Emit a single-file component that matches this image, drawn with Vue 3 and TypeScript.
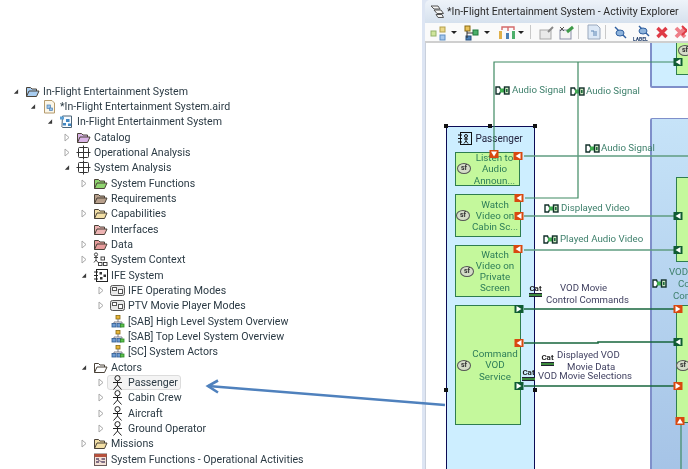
<script setup lang="ts">
interface TreeRow {
  label: string;
  depth: number;
  twisty?: 'open' | 'closed';
  icon: string;
  tint?: string;
  selected?: boolean;
}

const rows: TreeRow[] = [
  { label: 'In-Flight Entertainment System', depth: 0, twisty: 'open', icon: 'folder', tint: '#a9cdf0' },
  { label: '*In-Flight Entertainment System.aird', depth: 1, twisty: 'open', icon: 'file' },
  { label: 'In-Flight Entertainment System', depth: 2, twisty: 'open', icon: 'model' },
  { label: 'Catalog', depth: 3, twisty: 'closed', icon: 'folder', tint: '#d9b3e6' },
  { label: 'Operational Analysis', depth: 3, twisty: 'closed', icon: 'grid' },
  { label: 'System Analysis', depth: 3, twisty: 'open', icon: 'grid' },
  { label: 'System Functions', depth: 4, twisty: 'closed', icon: 'folder', tint: '#8fd46f' },
  { label: 'Requirements', depth: 4, icon: 'folder', tint: '#b8a08c' },
  { label: 'Capabilities', depth: 4, twisty: 'closed', icon: 'folder', tint: '#f2dfa6' },
  { label: 'Interfaces', depth: 4, icon: 'folder', tint: '#eeb4b4' },
  { label: 'Data', depth: 4, twisty: 'closed', icon: 'folder', tint: '#e89c9c' },
  { label: 'System Context', depth: 4, twisty: 'closed', icon: 'context' },
  { label: 'IFE System', depth: 4, twisty: 'open', icon: 'system' },
  { label: 'IFE Operating Modes', depth: 5, twisty: 'closed', icon: 'mode' },
  { label: 'PTV Movie Player Modes', depth: 5, twisty: 'closed', icon: 'mode' },
  { label: '[SAB] High Level System Overview', depth: 5, icon: 'diagram' },
  { label: '[SAB] Top Level System Overview', depth: 5, icon: 'diagram' },
  { label: '[SC] System Actors', depth: 5, icon: 'diagram' },
  { label: 'Actors', depth: 4, twisty: 'open', icon: 'folder', tint: '#ffffff' },
  { label: 'Passenger', depth: 5, twisty: 'closed', icon: 'actor', selected: true },
  { label: 'Cabin Crew', depth: 5, twisty: 'closed', icon: 'actor' },
  { label: 'Aircraft', depth: 5, twisty: 'closed', icon: 'actor' },
  { label: 'Ground Operator', depth: 5, twisty: 'closed', icon: 'actor' },
  { label: 'Missions', depth: 4, twisty: 'closed', icon: 'folder', tint: '#f2dfa6' },
  { label: 'System Functions - Operational Activities', depth: 4, icon: 'activity' },
];

// the canvas starts at 426,43 in the window; data below is in window coordinates
const at = (x: number, y: number, w?: number, h?: number) => ({
  left: `${x - 426}px`,
  top: `${y - 43}px`,
  ...(w !== undefined ? { width: `${w}px` } : {}),
  ...(h !== undefined ? { height: `${h}px` } : {}),
});

const functions = [
  { x: 455, y: 152, w: 65, h: 34, sfX: 464, sfY: 168, lines: ['Listen to', 'Audio', 'Announ...'] },
  { x: 455, y: 194, w: 66, h: 43, sfX: 463, sfY: 215, lines: ['Watch', 'Video on', 'Cabin Sc...'] },
  { x: 455, y: 245, w: 66, h: 52, sfX: 467, sfY: 271, lines: ['Watch', 'Video on', 'Private', 'Screen'] },
  { x: 455, y: 305, w: 66, h: 120, sfX: 464, sfY: 365, lines: ['Command', 'VOD', 'Service'] },
  { x: 676, y: 177, w: 40, h: 85, sfX: 0, sfY: 0, lines: [] },
  { x: 676, y: 305, w: 40, h: 118, sfX: 683, sfY: 365, lines: [] },
  { x: 676, y: 40, w: 40, h: 35, sfX: 685, sfY: 50, lines: [] },
];

const greenLabels = [
  { x: 512, y: 83, text: 'Audio Signal' },
  { x: 586, y: 84, text: 'Audio Signal' },
  { x: 601, y: 141, text: 'Audio Signal' },
  { x: 561, y: 201, text: 'Displayed Video' },
  { x: 560, y: 232, text: 'Played Audio Video' },
  { x: 669, y: 265, text: 'VOD' },
  { x: 678, y: 277, text: 'Control' },
  { x: 673, y: 289, text: 'Control' },
];

const darkLabels = [
  { x: 560, y: 281, text: 'VOD Movie' },
  { x: 546, y: 293, text: 'Control Commands' },
  { x: 557, y: 348, text: 'Displayed VOD' },
  { x: 567, y: 360, text: 'Movie Data' },
  { x: 538, y: 369, text: 'VOD Movie Selections' },
];

const connectors = [
  { x: 495, y: 86 }, { x: 570, y: 87 }, { x: 585, y: 144 },
  { x: 544, y: 204 }, { x: 543, y: 235 }, { x: 652, y: 279 },
];

const cats = [
  { x: 529, y: 285, w: 13 }, { x: 541, y: 354, w: 13 }, { x: 522, y: 369, w: 13 },
];

const wires = [
  { d: 'M494 154V62H675', c: '#3f8a63', w: 1.2 },
  { d: 'M578 62V198H525', c: '#3f8a63', w: 1.2 },
  { d: 'M524 156H688', c: '#5f9c80', w: 1.4 },
  { d: 'M524 216H675', c: '#5f9c80', w: 1.4 },
  { d: 'M524 250H675', c: '#5f9c80', w: 1.6 },
  { d: 'M524 309H675', c: '#17663c', w: 1.6 },
  { d: 'M524 343H598V342H675', c: '#17663c', w: 1.6 },
  { d: 'M524 386H675', c: '#17663c', w: 1.6 },
  { d: 'M681 425V469', c: '#3f8a63', w: 1.2 },
];

const ports = [
  { x: 678, y: 62, c: '#0f5c33', dir: 'left' },
  { x: 494, y: 154, c: '#d9480f', dir: 'down' },
  { x: 518, y: 156, c: '#d9480f', dir: 'left' },
  { x: 519, y: 198, c: '#d9480f', dir: 'left' },
  { x: 519, y: 216, c: '#d9480f', dir: 'left' },
  { x: 518, y: 249, c: '#d9480f', dir: 'left' },
  { x: 519, y: 309, c: '#0f5c33', dir: 'right' },
  { x: 519, y: 343, c: '#d9480f', dir: 'left' },
  { x: 519, y: 386, c: '#0f5c33', dir: 'right' },
  { x: 678, y: 216, c: '#0f5c33', dir: 'left' },
  { x: 678, y: 250, c: '#0f5c33', dir: 'left' },
  { x: 678, y: 309, c: '#d9480f', dir: 'right' },
  { x: 678, y: 342, c: '#0f5c33', dir: 'left' },
  { x: 678, y: 386, c: '#d9480f', dir: 'right' },
  { x: 680, y: 421, c: '#d9480f', dir: 'up' },
];

const arrowHead: Record<string, string> = {
  left: '-2.5,0 2.5,-3 2.5,3',
  right: '2.5,0 -2.5,-3 -2.5,3',
  down: '0,2.5 -3,-2.5 3,-2.5',
  up: '0,-2.5 -3,2.5 3,2.5',
};

const handles = [[446, 126], [490, 126], [535, 126], [446, 390], [535, 390]];
</script>

<template>
  <div class="page">
    <ul class="tree">
      <li v-for="(row, i) in rows" :key="i" class="row" :style="{ paddingLeft: `${13 + row.depth * 17}px` }">
        <span class="twisty">
          <svg v-if="row.twisty === 'open'" width="7" height="7" viewBox="0 0 7 7"><polygon points="6,1 6,6 1,6" fill="#3a3a3a" /></svg>
          <svg v-else-if="row.twisty === 'closed'" width="6" height="9" viewBox="0 0 6 9"><polygon points="1,1 5,4.5 1,8" fill="#fff" stroke="#a8a8a8" /></svg>
        </span>
        <span class="item" :class="{ selected: row.selected }">
          <svg class="icon" width="15" height="15" viewBox="0 0 15 15">
            <g v-if="row.icon === 'folder'" stroke="#4a4238" stroke-width="1" stroke-linejoin="round">
              <path d="M1.5 12.5V3.5H5.5L7 5H11.5V7" :fill="row.tint" />
              <path d="M1.5 12.5L4 7H14L11.5 12.5Z" :fill="row.tint" />
            </g>
            <g v-else-if="row.icon === 'file'">
              <path d="M2.5 1.5H10L12.5 4V14H2.5Z" fill="#fbf6e8" stroke="#b49a6c" />
              <rect x="5" y="6" width="3.5" height="3.5" fill="#9cc3e8" stroke="#4a7fb5" stroke-width=".7" />
              <rect x="7.5" y="9" width="3" height="2.5" fill="#9cc3e8" stroke="#4a7fb5" stroke-width=".7" />
            </g>
            <g v-else-if="row.icon === 'model'">
              <path d="M3.5 2H12.5V13.5H4C3 13.5 2.5 12.5 3 11.5Z" fill="#f7fbff" stroke="#4c6478" />
              <rect x="1" y="2.5" width="4" height="3" fill="#5a9fd4" />
              <rect x="7" y="5" width="3.5" height="3" fill="#3f86c2" />
              <rect x="4" y="9" width="3" height="2.5" fill="#3f86c2" />
              <rect x="9" y="9.5" width="3" height="2.5" fill="#3f86c2" />
            </g>
            <g v-else-if="row.icon === 'grid'" fill="none" stroke="#333" stroke-width="1">
              <rect x="2.5" y="2.5" width="10" height="10" rx="1" />
              <path d="M7.5 .5V14.5M.5 7.5H14.5" />
            </g>
            <g v-else-if="row.icon === 'context'" fill="none" stroke="#333" stroke-width=".9">
              <circle cx="3" cy="2.5" r="1.6" />
              <path d="M3 4V8M1 5.5H5M3 8L1 10.5M3 8L5 10.5" />
              <rect x="8" y="5" width="3.5" height="3" />
              <rect x="5.5" y="10.5" width="3.5" height="3" />
              <rect x="10.5" y="10.5" width="3.5" height="3" />
            </g>
            <g v-else-if="row.icon === 'system'" stroke="#222" stroke-width="1">
              <rect x="3.5" y="1.5" width="11" height="12" fill="#fff" />
              <path d="M1 4H5M1 7.5H5M1 11H5" />
              <rect x="6.5" y="4" width="2.5" height="2.5" fill="#333" stroke="none" />
              <rect x="10.5" y="6.5" width="2.5" height="2.5" fill="#333" stroke="none" />
              <rect x="7" y="9" width="2.5" height="2.5" fill="#333" stroke="none" />
            </g>
            <g v-else-if="row.icon === 'mode'" stroke="#555" stroke-width="1">
              <rect x=".5" y="2.5" width="14" height="10" rx="2" fill="#e8e8e8" />
              <rect x="2.5" y="4.5" width="4" height="3" fill="#fff" />
              <rect x="8.5" y="6.5" width="4" height="4" fill="#fff" />
            </g>
            <g v-else-if="row.icon === 'diagram'" stroke-width=".8">
              <rect x="6" y="1.5" width="4" height="3.5" fill="#e8b63a" stroke="#8a6a10" />
              <path d="M8 5V8M4 11V8H12V11" fill="none" stroke="#667" />
              <rect x="2" y="9.5" width="4" height="3.5" fill="#6d9bd1" stroke="#2e5a92" />
              <rect x="7" y="9.5" width="4" height="3.5" fill="#6d9bd1" stroke="#2e5a92" />
              <rect x="10.5" y="10" width="3.5" height="3" fill="#5cc04f" stroke="#2d8a24" />
            </g>
            <g v-else-if="row.icon === 'actor'" fill="none" stroke="#222" stroke-width="1">
              <circle cx="7.5" cy="3.2" r="2.6" />
              <path d="M7.5 5.8V10M3 7.5H12M7.5 10L3.5 14.5M7.5 10L11.5 14.5" />
            </g>
            <g v-else-if="row.icon === 'activity'">
              <rect x="1.5" y="2" width="12" height="11.5" fill="#f4e2d8" stroke="#6a5a5a" />
              <rect x="1.5" y="2" width="12" height="3" fill="#b6503c" />
              <path d="M3 7H6M8.5 7H12M3 10H6M8.5 10H12" stroke="#5a4a6a" stroke-width="1.6" />
              <path d="M5 8L9 10" stroke="#5a4a6a" stroke-width=".8" />
            </g>
          </svg>
          <span class="label">{{ row.label }}</span>
        </span>
      </li>
    </ul>

    <section class="window">
      <header class="tab">
        <svg width="15" height="15" viewBox="0 0 15 15" fill="#f4f4f4" stroke="#555" stroke-width="1">
          <path d="M1 2H8L10 5H4Z" />
          <path d="M4 6H11L13.5 9.5H7Z" />
          <path d="M6 10.5H12L13.5 13.5H8Z" />
        </svg>
        <span>*In-Flight Entertainment System - Activity Explorer</span>
      </header>

      <div class="toolbar">
        <svg width="262" height="18" viewBox="0 0 262 18">
          <g transform="translate(-426 -23)">
            <rect x="432" y="31" width="5" height="5" fill="#cfe59b" stroke="#93b26a" />
            <rect x="441" y="27" width="5" height="5" fill="#ecd98a" stroke="#b39f4b" />
            <rect x="441" y="35" width="5" height="5" fill="#a8c8ec" stroke="#5f8fc4" />
            <polygon points="452,31 458,31 455,34" fill="#222" />
            <rect x="466" y="26" width="5" height="5" fill="#e9c25a" stroke="#8a6a10" />
            <rect x="474" y="30" width="5" height="5" fill="#4caf6a" stroke="#1f7a3c" />
            <rect x="467" y="36" width="5" height="4" fill="#4a7fb5" stroke="#254f80" />
            <path d="M468 31V38M468 33H474" stroke="#333" fill="none" />
            <polygon points="485,31 491,31 488,34" fill="#222" />
            <path d="M503 30V27H515V30M509 27V31" stroke="#d46a6a" fill="none" stroke-width="1.4" />
            <rect x="500" y="31" width="3" height="8" fill="#e0b04a" />
            <rect x="507" y="33" width="3" height="6" fill="#4a7fb5" />
            <rect x="513" y="31" width="3" height="8" fill="#4caf6a" />
            <polygon points="519,31 525,31 522,34" fill="#222" />
            <path d="M531.5 25V39M579.5 25V39M606.5 25V39" stroke="#c9c9c9" />
            <rect x="541" y="30" width="11" height="9" fill="#e9e9e9" stroke="#a8a8a8" />
            <path d="M549 32L554 27" stroke="#888" stroke-width="2" />
            <rect x="561" y="30" width="11" height="9" fill="#f3f3f3" stroke="#8a8fa8" />
            <path d="M568 32L574 27" stroke="#3f9a4a" stroke-width="3" />
            <path d="M561 27L565 31M565 27L561 31" stroke="#555" />
            <path d="M589 25H598L601 28V39H589Z" fill="#dce8f6" stroke="#9aa8bc" />
            <path d="M592 31H595V36M597 31V36" stroke="#5f87b5" fill="none" />
            <path d="M616 27L627 38" stroke="#2f5f9f" stroke-width="1.4" />
            <ellipse cx="621" cy="33" rx="4" ry="3" fill="#8fb4dc" stroke="#2f5f9f" />
            <path d="M640 26L650 36" stroke="#2f5f9f" stroke-width="1.4" />
            <ellipse cx="644" cy="31" rx="4" ry="3" fill="#8fb4dc" stroke="#2f5f9f" />
            <text x="634" y="41" class="tb-text">LABEL</text>
            <path d="M658.5 28L667.5 37M667.5 28L658.5 37" stroke="#df3b45" stroke-width="3.4" />
            <path d="M677 28L686 37M686 28L677 37" stroke="#ee7f88" stroke-width="3.8" />
            <path d="M683 26L692 35M692 26L683 35" stroke="#df3b45" stroke-width="2" />
          </g>
        </svg>
      </div>

      <div class="canvas">
        <div class="block top-block" :style="at(650, 30, 50, 58)"></div>
        <div class="block big-block" :style="at(650, 118, 50, 360)"></div>

        <div class="actor-box" :style="at(446, 126, 89, 360)">
          <div class="actor-head">
            <svg width="14" height="13" viewBox="0 0 14 13" fill="none" stroke="#111" stroke-width="1">
              <rect x="2.5" y=".5" width="11" height="12" />
              <path d="M0 3H4M0 6.5H4M0 10H4" />
              <circle cx="8" cy="4" r="1.5" />
              <path d="M8 5.5V9M6 7H10M8 9L6 11.5M8 9L10 11.5" />
            </svg>
            <span>Passenger</span>
          </div>
        </div>

        <div v-for="(fn, i) in functions" :key="i" class="fn" :style="at(fn.x, fn.y, fn.w, fn.h)">
          <div class="fn-text">
            <span v-for="line in fn.lines" :key="line">{{ line }}</span>
          </div>
        </div>
        <span v-for="(fn, i) in functions.filter((f) => f.sfX)" :key="`sf${i}`" class="sf" :style="at(fn.sfX - 7, fn.sfY - 5)">sf</span>

        <span v-for="(l, i) in greenLabels" :key="`g${i}`" class="wire-label green" :style="at(l.x, l.y)">{{ l.text }}</span>
        <span v-for="(l, i) in darkLabels" :key="`d${i}`" class="wire-label dark" :style="at(l.x, l.y)">{{ l.text }}</span>

        <svg v-for="(c, i) in connectors" :key="`c${i}`" class="connector" :style="at(c.x, c.y)" width="15" height="9" viewBox="0 0 15 9">
          <path d="M1 1H4.5L6 4.5L4.5 8H1Z" fill="#fff" stroke="#12302a" stroke-width="1.4" />
          <rect x="5" y="2.5" width="5" height="4" fill="#3fae4f" />
          <rect x="9.5" y="1" width="4.5" height="7" fill="#cfe9c4" stroke="#12302a" stroke-width="1.4" />
          <rect x="11" y="3" width="1.6" height="3" fill="#1d6b3a" />
        </svg>

        <div v-for="(c, i) in cats" :key="`cat${i}`" class="cat" :style="at(c.x, c.y, c.w)">
          <span>Cat</span>
          <i></i>
        </div>

        <svg class="wires" width="262" height="426" viewBox="426 43 262 426">
          <path v-for="(w, i) in wires" :key="i" :d="w.d" fill="none" :stroke="w.c" :stroke-width="w.w" />
          <g v-for="(p, i) in ports" :key="`p${i}`" :transform="`translate(${p.x} ${p.y})`">
            <rect x="-4.5" y="-4" width="9" height="8" :fill="p.c" />
            <polygon :points="arrowHead[p.dir]" fill="#fff" />
          </g>
          <rect v-for="(h, i) in handles" :key="`h${i}`" :x="h[0] - 2" :y="h[1] - 2" width="4" height="4" fill="#111" />
        </svg>
      </div>
    </section>

    <svg class="pointer" width="688" height="469" viewBox="0 0 688 469" fill="none" stroke="#4f81bd" stroke-width="2.6">
      <path d="M445 405L208 386" />
      <path d="M218 380.5L208 386L218 392.5" stroke-linejoin="miter" />
    </svg>
  </div>
</template>

<style scoped>
.page {
  position: relative;
  display: flex;
  width: 688px;
  height: 469px;
  overflow: hidden;
  background: #fff;
  font-family: Roboto, "Liberation Sans", sans-serif;
  filter: blur(0.35px);
}

.tree {
  flex: 0 0 422px;
  margin: 0;
  padding: 83.5px 0 0;
  list-style: none;
  font-size: 10.6px;
  color: #2b3a44;
}

.row {
  display: flex;
  align-items: center;
  height: 15.34px;
  white-space: nowrap;
}

.twisty {
  display: flex;
  align-items: center;
  justify-content: center;
  flex: 0 0 6px;
  width: 6px;
  margin-right: 6px;
}

.item {
  display: flex;
  align-items: center;
  gap: 3px;
}

.item.selected {
  box-sizing: border-box;
  height: 15px;
  margin-left: -3px;
  padding: 0 2px;
  background: #f4f4f4;
  border: 1px solid #dcdcdc;
  border-radius: 3px;
}

.icon {
  flex: 0 0 15px;
}

.window {
  display: flex;
  flex-direction: column;
  flex: 1;
  min-width: 0;
  background: #dde5f3;
  padding-left: 3px;
}

.tab {
  display: flex;
  align-items: center;
  gap: 2px;
  height: 23px;
  padding-left: 5px;
  font-size: 10.5px;
  white-space: nowrap;
  color: #2a2a2a;
  background: linear-gradient(#eef3f9, #d6e1ee);
  border-top-left-radius: 5px;
}

.tab svg {
  flex: none;
}

.toolbar {
  display: flex;
  height: 20px;
  background: #fafafa;
  border-bottom: 2px solid #cfcfcf;
  box-sizing: border-box;
}

.tb-text {
  font-size: 5px;
  font-weight: 700;
  fill: #24406e;
}

.canvas {
  position: relative;
  flex: 1;
  overflow: hidden;
  background: #fff;
  border-left: 1px solid #c9d0dc;
}

.block {
  position: absolute;
  box-sizing: border-box;
  border: 1px solid #7f8fca;
  border-left-width: 2px;
  border-radius: 2px;
}

.top-block {
  background: #cfeeff;
  border-bottom-width: 2px;
}

.big-block {
  background: linear-gradient(#c6e3f8, #a5c3e6);
}

.actor-box {
  position: absolute;
  box-sizing: border-box;
  background: #cdeeff;
  border: 1.5px solid #0b0b55;
}

.actor-head {
  display: flex;
  justify-content: center;
  align-items: center;
  gap: 3px;
  height: 22px;
  font-size: 10px;
  color: #1f1f3a;
}

.fn {
  position: absolute;
  box-sizing: border-box;
  display: flex;
  align-items: center;
  justify-content: center;
  background: #c4f89c;
  border: 1px solid #2e7d4f;
}

.fn-text {
  display: flex;
  flex-direction: column;
  align-items: center;
  padding-left: 14px;
  font-size: 9.8px;
  line-height: 11.2px;
  color: #2d7d58;
  white-space: nowrap;
}

.sf {
  position: absolute;
  box-sizing: border-box;
  width: 14px;
  height: 11px;
  line-height: 8px;
  text-align: center;
  font-size: 7px;
  font-weight: 700;
  color: #333;
  background: #d4dcc8;
  border: 1px solid #555;
  border-radius: 50%;
}

.wire-label {
  position: absolute;
  font-size: 9.7px;
  line-height: 13px;
  white-space: nowrap;
}

.green {
  color: #3f806c;
}

.dark {
  color: #3f3f5f;
  font-size: 9.6px;
}

.connector {
  position: absolute;
}

.cat {
  position: absolute;
  display: flex;
  flex-direction: column;
  align-items: center;
  font-size: 8px;
  line-height: 8px;
  font-weight: 700;
  color: #222;
}

.cat i {
  display: block;
  width: 100%;
  height: 2px;
  background: #3d8a3d;
  border: solid #223;
  border-width: 0.5px 0;
}

.wires {
  position: absolute;
  left: 0;
  top: 0;
}

.pointer {
  position: absolute;
  left: 0;
  top: 0;
  pointer-events: none;
}
</style>
